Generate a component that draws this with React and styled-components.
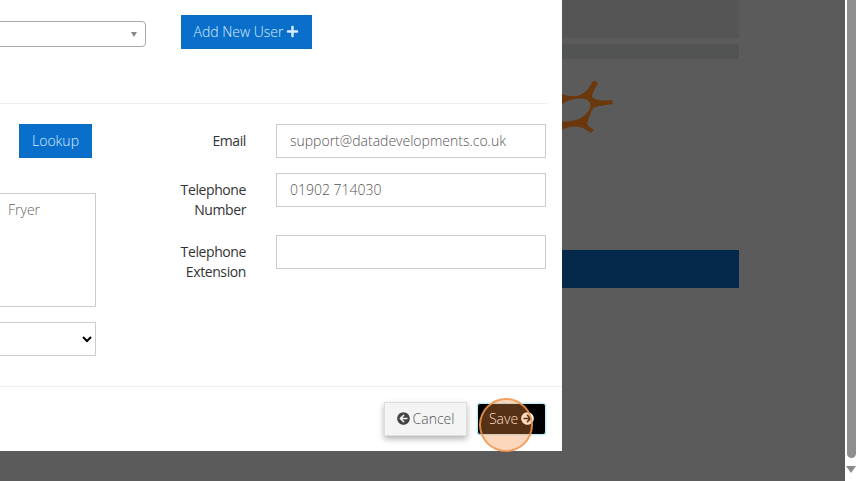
import React from 'react'
import styled, { createGlobalStyle } from 'styled-components'
import { FaPlus, FaArrowCircleLeft, FaArrowCircleRight } from 'react-icons/fa'

const GlobalStyle = createGlobalStyle`
  html, body {
    margin: 0;
    padding: 0;
    height: 100%;
    overflow: hidden;
    background: #ffffff;
  }
  * { box-sizing: border-box; }
`

const Page = styled.div`
  display: flex;
  width: 860px;
  height: 481px;
  font-family: 'Open Sans', sans-serif;
  font-size: 14px;
`

const Stage = styled.div`
  position: relative;
  width: 845px;
  height: 481px;
  background: #5b5b5b;
  overflow: hidden;
`

const Backdrop = styled.div`
  display: flex;
  flex-direction: column;
  width: 739px;
`

const HeaderBar = styled.div`
  height: 38px;
  background: #555555;
`

const NavBar = styled.div`
  height: 15px;
  margin-top: 6px;
  background: #525453;
`

const LogoRow = styled.div`
  display: flex;
  justify-content: flex-end;
  height: 191px;
  padding: 11px 114px 0 0;
`

const Logo = styled.svg`
  width: 70px;
  height: 70px;
`

const Banner = styled.div`
  height: 38px;
  background: #03284a;
`

const Modal = styled.div`
  position: absolute;
  left: 0;
  top: 0;
  width: 562px;
  height: 451px;
  display: flex;
  flex-direction: column;
  background: #ffffff;
  overflow: hidden;
`

const TopRow = styled.div`
  display: flex;
  align-items: flex-start;
  height: 104px;
  padding-top: 15px;
  margin-right: 15px;
  border-bottom: 1px solid #eeeeee;
`

const UserSelect = styled.div`
  display: flex;
  align-items: center;
  justify-content: flex-end;
  width: 156px;
  height: 26px;
  margin: 6px 35px 0 -10px;
  padding-right: 8px;
  border: 1px solid #aaaaaa;
  border-radius: 4px;
  background: #ffffff;

  &::after {
    content: '';
    border-top: 5px solid #888888;
    border-left: 3px solid transparent;
    border-right: 3px solid transparent;
  }
`

const PrimaryButton = styled.button`
  display: inline-flex;
  align-items: center;
  justify-content: center;
  gap: 3px;
  width: ${props => props.$width}px;
  height: 34px;
  margin-right: ${props => props.$inset || 0}px;
  padding: 0 0 2px;
  border: 1px solid #0a6ebd;
  border-radius: 0;
  background: #0a6fca;
  color: #d6ecfc;
  font-family: inherit;
  font-size: 14px;
  font-weight: 300;
  white-space: nowrap;
`

const FormGrid = styled.div`
  flex: 1;
  display: grid;
  grid-template-columns: 96px 150px 270px;
  padding-top: 20px;
`

const LeftColumn = styled.div`
  display: flex;
  flex-direction: column;
  align-items: flex-end;
`

const Description = styled.div`
  width: 106px;
  height: 114px;
  margin: 35px 0 15px -10px;
  padding: 6px 0 0 17px;
  border: 1px solid #cccccc;
  color: #666666;
  font-weight: 300;
  line-height: 20px;
`

const NativeSelect = styled.select`
  width: 106px;
  height: 34px;
  margin-left: -10px;
  border: 1px solid #cccccc;
  border-radius: 0;
  background: #ffffff;
  font-family: inherit;
  font-size: 14px;
`

const RightColumn = styled.div`
  grid-column: 2 / 4;
  display: flex;
  flex-direction: column;
  gap: 15px;
`

const Field = styled.div`
  display: grid;
  grid-template-columns: 150px 270px;
  column-gap: 30px;
  width: 450px;
`

const Label = styled.label`
  justify-self: end;
  width: 80px;
  padding-top: 7px;
  color: #333333;
  line-height: 20px;
  letter-spacing: -0.4px;
  text-align: right;
`

const TextInput = styled.input`
  width: 270px;
  height: 34px;
  padding: 0 13px 2px;
  border: 1px solid #cccccc;
  border-radius: 0;
  outline: none;
  color: #555555;
  font-family: inherit;
  font-size: 14px;
  font-weight: 300;
`

const Footer = styled.div`
  display: flex;
  justify-content: flex-end;
  align-items: center;
  gap: 10px;
  height: 65px;
  padding: 0 16px 0 0;
  border-top: 1px solid #eeeeee;
`

const CancelButton = styled.button`
  display: inline-flex;
  align-items: center;
  justify-content: center;
  gap: 3px;
  width: 83px;
  height: 34px;
  padding: 0 0 2px;
  border: 1px solid #dddddd;
  border-radius: 0;
  background: #f4f4f4;
  box-shadow: 0 3px 6px rgba(0, 0, 0, 0.3);
  color: #555555;
  font-family: inherit;
  font-size: 14px;
  font-weight: 300;
`

const SaveButton = styled.button`
  display: inline-flex;
  align-items: center;
  justify-content: center;
  gap: 3px;
  width: 69px;
  height: 32px;
  padding: 0 0 2px;
  border: 1px solid #bfeef7;
  border-radius: 3px;
  background: #000000;
  box-shadow: 0 0 2px rgba(102, 200, 233, 0.5);
  color: #ffffff;
  font-family: inherit;
  font-size: 14px;
  font-weight: 300;
`

// click highlight over the save button
const ClickMarker = styled.div`
  position: absolute;
  left: 479px;
  top: 398px;
  width: 54px;
  height: 54px;
  border: 2px solid rgba(240, 150, 80, 0.85);
  border-radius: 50%;
  background: rgba(250, 140, 60, 0.35);
`

const Scrollbar = styled.div`
  display: flex;
  flex-direction: column;
  align-items: center;
  width: 15px;
  padding-right: 3px;
  background: #ffffff;
`

const Thumb = styled.div`
  width: 9px;
  height: 458px;
  border-radius: 0 0 5px 5px;
  background: #8f8f8f;
`

const ArrowDown = styled.div`
  margin-top: 8px;
  border-top: 7px solid #8a8a8a;
  border-left: 5px solid transparent;
  border-right: 5px solid transparent;
`

const App = () => {
  return (
    <Page>
      <GlobalStyle />
      <Stage>
        <Backdrop>
          <HeaderBar />
          <NavBar />
          <LogoRow>
            <Logo viewBox="555 70 70 70">
              <path
                fill="#6b380e"
                fillRule="evenodd"
                d="M555 90 C562 95 572 98 580 95 C585 93 590 88 592 82 L595 81 L598 83 C595 88 592 94 592 97 C596 101 604 101 612 100 L613 104 C605 105 597 106 593 108 C590 114 588 120 587 124 C589 127 592 129 594 130 L591 133 C587 130 584 128 580 127 C572 125 563 128 555 134 Z M555 111 C562 101 575 97 585 99 C592 101 592 108 586 114 C578 122 565 123 555 120 Z"
              />
            </Logo>
          </LogoRow>
          <Banner />
        </Backdrop>

        <Modal>
          <TopRow>
            <UserSelect />
            <PrimaryButton $width={131}>
              Add New User <FaPlus size={13} />
            </PrimaryButton>
          </TopRow>

          <FormGrid>
            <LeftColumn>
              <PrimaryButton $width={73} $inset={4}>Lookup</PrimaryButton>
              <Description>Fryer</Description>
              <NativeSelect />
            </LeftColumn>
            <RightColumn>
              <Field>
                <Label>Email</Label>
                <TextInput defaultValue="support@datadevelopments.co.uk" />
              </Field>
              <Field>
                <Label>Telephone Number</Label>
                <TextInput defaultValue="01902 714030" />
              </Field>
              <Field>
                <Label>Telephone Extension</Label>
                <TextInput />
              </Field>
            </RightColumn>
          </FormGrid>

          <Footer>
            <CancelButton>
              <FaArrowCircleLeft size={13} color="#444444" /> Cancel
            </CancelButton>
            <SaveButton>
              Save <FaArrowCircleRight size={13} />
            </SaveButton>
          </Footer>
        </Modal>

        <ClickMarker />
      </Stage>
      <Scrollbar>
        <Thumb />
        <ArrowDown />
      </Scrollbar>
    </Page>
  )
}

export default App
